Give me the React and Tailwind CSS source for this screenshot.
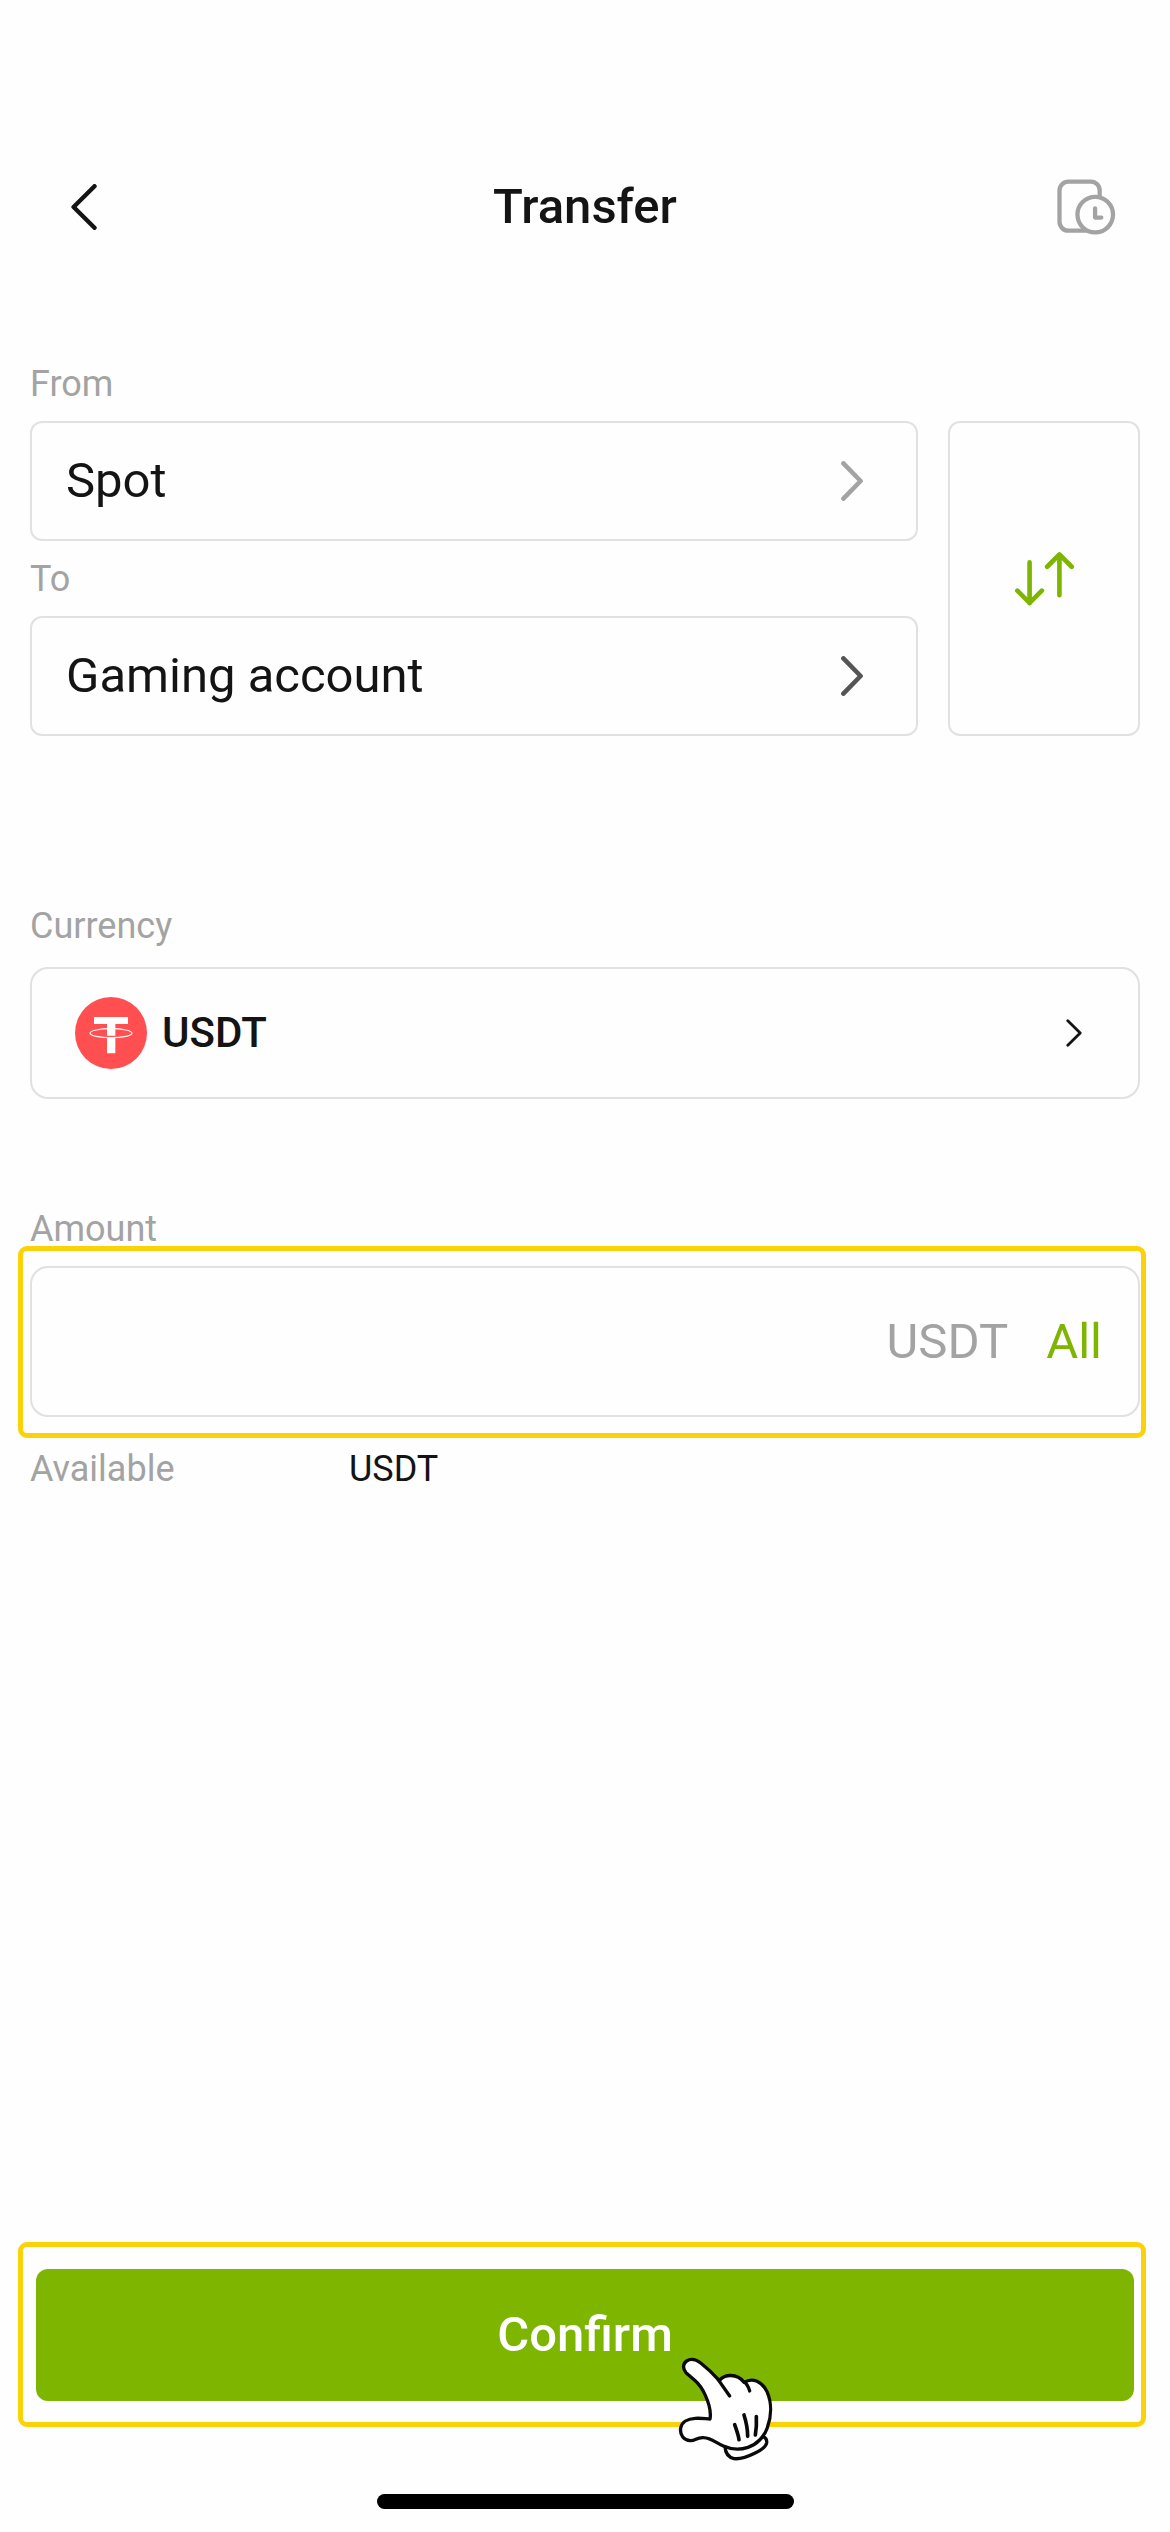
import React, { useState } from "react";

function ChevronRight({ className }) {
  return (
    <svg viewBox="0 0 22 40" className={`w-[22px] h-10 shrink-0 ${className}`} fill="none" stroke="currentColor" strokeWidth="4.6" strokeLinecap="round" strokeLinejoin="round">
      <path d="M2.4 2.4 19.6 20 2.4 37.6" />
    </svg>
  );
}

function HistoryIcon() {
  return (
    <svg viewBox="80 84 178 170" className="w-[59px] h-14" fill="none" stroke="#a3a3a3" strokeWidth="13" strokeLinecap="round" strokeLinejoin="round">
      <path d="M209 134V120A27 27 0 0 0 182 92H114A27 27 0 0 0 87 119V214A27 27 0 0 0 114 241H168" />
      <circle cx="195.500" cy="192" r="54" />
      <path d="M195 173V201H214" />
    </svg>
  );
}

function SwapIcon() {
  return (
    <svg viewBox="702 458 178 162" className="w-[59px] h-[54px]" fill="none" stroke="#7db500" strokeWidth="14" strokeLinecap="round" strokeLinejoin="round">
      <path d="M746 489V612M709 574l37 37 37-37" />
      <path d="M836 588V465M799 502l37-37 37 37" />
    </svg>
  );
}

function TetherIcon() {
  return (
    <svg viewBox="45 36 216 216" className="size-18 shrink-0">
      <circle cx="153" cy="144" r="108" fill="#ff4f51" />
      <path d="M102 96H204V117H166V152H141V117H102ZM141 157H166V205H141Z" fill="#fff" />
      <ellipse cx="153" cy="144.500" rx="63" ry="13.500" fill="none" stroke="#fff" strokeWidth="3.400" />
    </svg>
  );
}

// Cartoon glove pointing at the confirm button
function HandPointer({ className }) {
  return (
    <svg viewBox="51 48 294 318" className={`w-[98px] h-[106px] ${className}`} stroke="#0a0a0a" strokeWidth="10" strokeLinecap="round" strokeLinejoin="round">
      <path d="M195 320C196 340 206 352 222 356C240 358 264 350 284 340C302 331 318 322 320 308C321 298 315 292 308 290Z" fill="#fff" />
      <path d="M150 237C154 214 147 190 136 166C127 146 117 132 104 121L78 98C67 86 69 70 80 63C92 55 108 58 122 69C144 86 162 104 178 122C192 103 231 98 252 127C278 111 307 125 321 155C335 187 335 228 322 263C313 290 291 313 264 322C236 331 210 327 190 318C165 307 154 294 131 293C111 291 106 303 91 302C72 301 59 286 62 264C65 246 83 236 106 235C123 234 134 236 150 237Z" fill="#fff" />
      <path d="M174 118 209 168M252 125C260 131 266 142 269 153" fill="none" />
      <path d="M224 254C229 269 235 284 237 299M252 225C259 247 263 268 263 289M289 230C290 249 289 269 286 285" fill="none" strokeWidth="11" />
    </svg>
  );
}

function AccountField({ id, label, value, chevron }) {
  return (
    <div>
      <label htmlFor={id} className="block text-[36px] leading-[42px] text-[#a3a3a3]">
        {label}
      </label>
      <button
        id={id}
        type="button"
        className="mt-4 flex h-30 w-full items-center justify-between rounded-xl border-2 border-[#e1e1e1] pl-[34px] pr-[53px] text-left text-[49px] leading-[56px]"
      >
        {value}
        <ChevronRight className={chevron} />
      </button>
    </div>
  );
}

export default function App() {
  const [accounts, setAccounts] = useState(["Spot", "Gaming account"]);
  const [amount, setAmount] = useState("");

  return (
    <div className="flex min-h-screen flex-col bg-[#fefefe] font-[Roboto,sans-serif] text-[#141414]">
      {/* HEADER */}
      <header className="grid grid-cols-[1fr_auto_1fr] items-center px-[54px] pt-[179px]">
        <button type="button" aria-label="Back" className="justify-self-start pl-[17px]">
          <svg viewBox="0 0 26 46" className="h-[46px] w-[26px]" fill="none" stroke="currentColor" strokeWidth="4.400" strokeLinecap="round" strokeLinejoin="round">
            <path d="M23.500 2.200 2.600 23 23.500 43.800" />
          </svg>
        </button>
        <h1 className="text-[49px] font-medium leading-[56px]">Transfer</h1>
        <button type="button" aria-label="Transfer history" className="justify-self-end">
          <HistoryIcon />
        </button>
      </header>

      <main className="grow px-[30px] pt-32">
        {/* FROM / TO */}
        <section className="flex gap-[30px]">
          <div className="flex grow flex-col gap-[17px]">
            <AccountField id="from" label="From" value={accounts[0]} chevron="text-[#a3a3a3]" />
            <AccountField id="to" label="To" value={accounts[1]} chevron="text-[#555555]" />
          </div>
          <button
            type="button"
            aria-label="Swap accounts"
            onClick={() => setAccounts([accounts[1], accounts[0]])}
            className="mt-[58px] flex w-48 items-center justify-center rounded-xl border-2 border-[#e1e1e1]"
          >
            <SwapIcon />
          </button>
        </section>

        {/* CURRENCY */}
        <section className="mt-[169px]">
          <label htmlFor="currency" className="block text-[36px] leading-[42px] text-[#a3a3a3]">
            Currency
          </label>
          <button
            id="currency"
            type="button"
            className="mt-5 flex h-33 w-full items-center rounded-[18px] border-2 border-[#e1e1e1] pl-[43px] pr-14"
          >
            <TetherIcon />
            <span className="ml-[15px] text-[42px] font-medium leading-[50px]">USDT</span>
            <svg viewBox="0 0 16 28" className="ml-auto h-7 w-4" fill="none" stroke="currentColor" strokeWidth="2.800" strokeLinecap="round" strokeLinejoin="round">
              <path d="M1.800 1.800 14.200 14 1.800 26.200" />
            </svg>
          </button>
        </section>

        {/* AMOUNT */}
        <section className="mt-[109px]">
          <label htmlFor="amount" className="block text-[36px] leading-[42px] text-[#a3a3a3]">
            Amount
          </label>
          <div className="relative mt-4 flex h-[151px] items-center rounded-[18px] border-2 border-[#e1e1e1] pl-[34px] pr-9 text-[49px] leading-[56px]">
            <input
              id="amount"
              inputMode="decimal"
              value={amount}
              onChange={(e) => setAmount(e.target.value)}
              className="min-w-0 grow outline-none"
            />
            <span className="text-[#a3a3a3]">USDT</span>
            <button type="button" className="ml-[38px] text-[#7db500]">All</button>
            <div className="pointer-events-none absolute -bottom-[23px] -left-[14px] -right-2 -top-[22px] rounded-[9px] border-5 border-[#fad207]" />
          </div>
          <p className="mt-[31px] flex text-[36px] leading-[42px]">
            <span className="w-[319px] text-[#a3a3a3]">Available</span>
            <span>USDT</span>
          </p>
        </section>
      </main>

      {/* CONFIRM */}
      <footer className="px-9 pb-[23px]">
        <div className="relative">
          <button type="button" className="block h-33 w-full rounded-xl bg-[#7db500] text-[49px] font-medium leading-[56px] text-white">
            Confirm
          </button>
          <div className="pointer-events-none absolute -bottom-[26px] -left-[18px] -right-3 -top-[27px] rounded-[9px] border-5 border-[#fad207]" />
          <HandPointer className="pointer-events-none absolute left-1/2 top-[87px] ml-[92px]" />
        </div>
        <div className="mx-auto mt-[93px] h-[15px] w-[417px] rounded-full bg-black" />
      </footer>
    </div>
  );
}
